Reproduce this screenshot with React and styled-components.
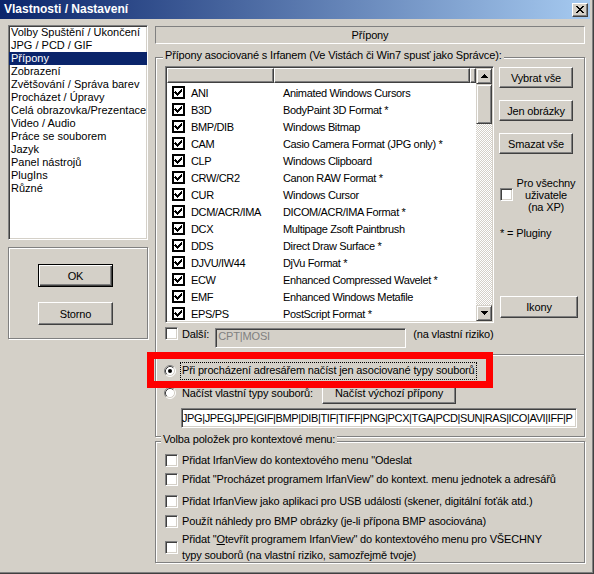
import React from 'react';
import styled, { createGlobalStyle, css } from 'styled-components';

const GlobalStyle = createGlobalStyle`
  html, body {
    margin: 0;
    padding: 0;
    background: #d4d0c8;
  }
  body {
    font-family: "Liberation Sans", Arial, sans-serif;
    font-size: 11px;
    letter-spacing: -0.15px;
    color: #000;
  }
  * {
    box-sizing: border-box;
  }
`;

// classic 3D edges
const sunken = css`
  border: 1px solid;
  border-color: #808080 #fff #fff #808080;
  box-shadow: inset 1px 1px #404040, inset -1px -1px #d4d0c8;
`;

const raised = css`
  border: 1px solid;
  border-color: #fff #404040 #404040 #fff;
  box-shadow: inset -1px -1px #808080;
`;

const etched = css`
  border: 1px solid #808080;
  box-shadow: inset 1px 1px #fff, 1px 1px #fff;
`;

const Window = styled.div`
  position: relative;
  width: 594px;
  height: 574px;
  overflow: hidden;
  background: #d4d0c8;
  box-shadow: inset -1px -1px #404040, inset -2px -2px #808080;
`;

const TitleBar = styled.div`
  display: flex;
  align-items: center;
  justify-content: space-between;
  width: 590px;
  height: 19px;
  padding: 0 2px 0 4px;
  background: linear-gradient(to right, #0a246a, #a6caf0);
`;

const TitleText = styled.span`
  color: #fff;
  font-weight: bold;
  font-size: 12px;
  letter-spacing: 0;
  line-height: 19px;
`;

const CloseButton = styled.div`
  display: flex;
  align-items: center;
  justify-content: center;
  width: 16px;
  height: 14px;
  background: #d4d0c8;
  ${raised}
`;

const Body = styled.div`
  display: flex;
  padding: 6px 0 0 8px;
`;

const LeftColumn = styled.div`
  display: flex;
  flex-direction: column;
  width: 140px;
`;

const CategoryList = styled.div`
  height: 215px;
  background: #fff;
  ${sunken}
`;

const CategoryItem = styled.div`
  height: 13px;
  line-height: 13px;
  padding-left: 2px;
  letter-spacing: 0;
  white-space: nowrap;
  background: ${(p) => (p.$selected ? '#0a246a' : 'transparent')};
  color: ${(p) => (p.$selected ? '#fff' : '#000')};
`;

const ActionGroup = styled.div`
  display: flex;
  flex-direction: column;
  align-items: flex-start;
  gap: 15px;
  height: 92px;
  margin-top: 7px;
  padding: 16px 0 0 29px;
  ${etched}
`;

const defaultEdge = css`
  border: 1px solid #000;
  box-shadow: inset 1px 1px #fff, inset -1px -1px #404040, inset -2px -2px #808080;
`;

const PushButton = styled.div`
  display: flex;
  align-items: center;
  justify-content: center;
  flex-shrink: 0;
  width: ${(p) => p.$w || 75}px;
  height: ${(p) => p.$h || 23}px;
  margin-top: ${(p) => p.$top || 0}px;
  margin-left: ${(p) => p.$left || 0}px;
  background: #d4d0c8;
  white-space: nowrap;
  ${(p) => (p.$default ? defaultEdge : raised)}
`;

const RightColumn = styled.div`
  display: flex;
  flex-direction: column;
  width: 430px;
  margin-left: 7px;
`;

const PageHeader = styled.div`
  height: 18px;
  margin-top: 1px;
  border: 1px solid;
  border-color: #808080 #fff #fff #808080;
  line-height: 16px;
  text-align: center;
`;

const GroupBox = styled.div`
  position: relative;
  display: flex;
  flex-direction: column;
  margin-top: ${(p) => p.$top}px;
  padding: ${(p) => p.$pad};
  height: ${(p) => (p.$height ? `${p.$height}px` : 'auto')};
  ${etched}
`;

const Legend = styled.span`
  position: absolute;
  top: -9px;
  left: ${(p) => p.$left}px;
  padding: 0 2px;
  line-height: 13px;
  white-space: nowrap;
  background: #d4d0c8;
`;

const TopRow = styled.div`
  display: flex;
  align-items: flex-start;
`;

const ListView = styled.div`
  display: flex;
  width: 329px;
  height: 257px;
  background: #fff;
  ${sunken}
  padding: 1px;
`;

const ListMain = styled.div`
  flex: 1;
  display: flex;
  flex-direction: column;
  overflow: hidden;
`;

const HeaderRow = styled.div`
  display: flex;
  height: 15px;
  flex-shrink: 0;
`;

const HeaderCell = styled.div`
  width: ${(p) => (p.$w ? `${p.$w}px` : 'auto')};
  flex: ${(p) => (p.$w ? 'none' : 1)};
  background: #d4d0c8;
  ${raised}
`;

const Rows = styled.div`
  padding-top: 1px;
`;

const Row = styled.div`
  display: flex;
  align-items: center;
  height: 17px;
  letter-spacing: -0.35px;
  white-space: nowrap;
`;

const ExtCell = styled.div`
  display: flex;
  align-items: center;
  gap: 6px;
  width: 107px;
  padding-left: 5px;
`;

const DescCell = styled.div`
  padding-left: 9px;
`;

const ScrollBar = styled.div`
  display: flex;
  flex-direction: column;
  width: 16px;
  flex-shrink: 0;
`;

const scrollEdge = css`
  border: 1px solid;
  border-color: #d4d0c8 #404040 #404040 #d4d0c8;
  box-shadow: inset 1px 1px #fff, inset -1px -1px #808080;
`;

const ScrollButton = styled.div`
  display: flex;
  align-items: center;
  justify-content: center;
  height: 16px;
  background: #d4d0c8;
  ${scrollEdge}
`;

const ScrollThumb = styled.div`
  height: 40px;
  background: #d4d0c8;
  ${scrollEdge}
`;

const ScrollTrack = styled.div`
  flex: 1;
  background: repeating-conic-gradient(#d4d0c8 0 25%, #fff 0 50%) 0 0 / 2px 2px;
`;

const SideColumn = styled.div`
  display: flex;
  flex-direction: column;
  align-items: flex-start;
  margin-left: 5px;
  padding-top: 1px;
`;

const AllUsers = styled.div`
  display: flex;
  align-items: flex-start;
  margin-top: 23px;
  margin-left: 1px;
`;

const AllUsersText = styled.div`
  width: 64px;
  margin-left: 1px;
  line-height: 12px;
  text-align: center;
`;

const Note = styled.div`
  margin-top: 14px;
  margin-left: 1px;
  line-height: 13px;
`;

const Box = styled.span`
  display: inline-block;
  flex-shrink: 0;
  width: 13px;
  height: 13px;
  margin-top: ${(p) => p.$top || 0}px;
  background: #fff;
  border: 1px solid;
  border-color: #808080 #fff #fff #808080;
  box-shadow: inset 1px 1px #404040, inset -1px -1px #d4d0c8;
`;

const ExtraRow = styled.div`
  display: flex;
  align-items: flex-start;
  height: 20px;
  margin-top: 5px;
`;

const Label = styled.span`
  line-height: 13px;
  margin-left: ${(p) => p.$left || 0}px;
  white-space: nowrap;
`;

const TextField = styled.div`
  width: ${(p) => p.$w}px;
  height: 20px;
  margin-top: ${(p) => p.$top || 0}px;
  margin-left: ${(p) => p.$left || 0}px;
  padding: ${(p) => p.$pad || '2px 2px'};
  overflow: hidden;
  white-space: nowrap;
  line-height: 14px;
  letter-spacing: ${(p) => p.$tight || -0.15}px;
  background: ${(p) => (p.$disabled ? '#d4d0c8' : '#fff')};
  color: ${(p) => (p.$disabled ? '#808080' : '#000')};
  ${sunken}
`;

const Separator = styled.div`
  height: 2px;
  margin: 6px 0 0 -9px;
  width: calc(100% + 9px);
  border-top: 1px solid #808080;
  border-bottom: 1px solid #fff;
`;

const RadioRow = styled.div`
  display: flex;
  align-items: center;
  height: ${(p) => p.$h}px;
  margin-top: ${(p) => p.$top}px;
  margin-left: -1px;
`;

const FocusLabel = styled.span`
  margin-left: 4px;
  padding: 1px 1px 2px;
  line-height: 13px;
  border: 1px dotted #000;
  white-space: nowrap;
`;

const FixedLabel = styled.span`
  width: 146px;
  padding-left: 6px;
  line-height: 13px;
  white-space: nowrap;
`;

const OptionRow = styled.div`
  display: flex;
  align-items: center;
  margin-top: ${(p) => p.$top}px;
`;

const OptionText = styled.span`
  margin-left: 4px;
  line-height: ${(p) => p.$lh || 13}px;
`;

const Highlight = styled.div`
  position: absolute;
  left: 147px;
  top: 352px;
  width: 346px;
  height: 36px;
  border: 7px solid #ff0000;
`;

const ListCheck = () => (
  <svg width="13" height="13" viewBox="0 0 13 13" shapeRendering="crispEdges">
    <rect x="1" y="1" width="11" height="11" fill="#fff" stroke="#000" strokeWidth="2" />
    <path d="M3 5h1v1h1v1h1v-1h1v-1h1v-1h1v-1h1v3h-1v1h-1v1h-1v1h-1v1h-1v-1h-1v-1h-1v-1h-1z" fill="#000" />
  </svg>
);

const Radio = ({ checked }) => (
  <svg width="12" height="12" viewBox="0 0 12 12">
    <circle cx="6" cy="6" r="5" fill="#fff" />
    <path d="M2.11 9.89 A5.5 5.5 0 0 1 9.89 2.11" fill="none" stroke="#808080" />
    <path d="M9.89 2.11 A5.5 5.5 0 0 1 2.11 9.89" fill="none" stroke="#fff" />
    <path d="M2.82 9.18 A4.5 4.5 0 0 1 9.18 2.82" fill="none" stroke="#404040" />
    <path d="M9.18 2.82 A4.5 4.5 0 0 1 2.82 9.18" fill="none" stroke="#d4d0c8" />
    {checked && <circle cx="6" cy="6" r="2" fill="#000" />}
  </svg>
);

const Arrow = ({ down }) => (
  <svg width="7" height="4" viewBox="0 0 7 4" shapeRendering="crispEdges">
    {down ? (
      <path d="M0 0h7v1h-1v1h-1v1h-1v1h-1v-1h-1v-1h-1v-1h-1z" fill="#000" />
    ) : (
      <path d="M3 0h1v1h1v1h1v1h1v1h-7v-1h1v-1h1v-1h1z" fill="#000" />
    )}
  </svg>
);

const CloseGlyph = () => (
  <svg width="8" height="7" viewBox="0 0 8 7" shapeRendering="crispEdges">
    <path
      d="M0 0h2v1h1v1h2v-1h1v-1h2v1h-1v1h-1v1h-1v1h1v1h1v1h1v1h-2v-1h-1v-1h-2v1h-1v1h-2v-1h1v-1h1v-1h1v-1h-1v-1h-1v-1h-1z"
      fill="#000"
    />
  </svg>
);

const categories = [
  'Volby Spuštění / Ukončení',
  'JPG / PCD / GIF',
  'Přípony',
  'Zobrazení',
  'Zvětšování / Správa barev',
  'Procházet / Úpravy',
  'Celá obrazovka/Prezentace',
  'Video / Audio',
  'Práce se souborem',
  'Jazyk',
  'Panel nástrojů',
  'PlugIns',
  'Různé',
];

const formats = [
  ['ANI', 'Animated Windows Cursors'],
  ['B3D', 'BodyPaint 3D Format *'],
  ['BMP/DIB', 'Windows Bitmap'],
  ['CAM', 'Casio Camera Format (JPG only) *'],
  ['CLP', 'Windows Clipboard'],
  ['CRW/CR2', 'Canon RAW Format *'],
  ['CUR', 'Windows Cursor'],
  ['DCM/ACR/IMA', 'DICOM/ACR/IMA Format *'],
  ['DCX', 'Multipage Zsoft Paintbrush'],
  ['DDS', 'Direct Draw Surface *'],
  ['DJVU/IW44', 'DjVu Format *'],
  ['ECW', 'Enhanced Compressed Wavelet *'],
  ['EMF', 'Enhanced Windows Metafile'],
  ['EPS/PS', 'PostScript Format *'],
];

const App = () => {
  return (
    <>
      <GlobalStyle />
      <Window>
        <TitleBar>
          <TitleText>Vlastnosti / Nastavení</TitleText>
          <CloseButton>
            <CloseGlyph />
          </CloseButton>
        </TitleBar>

        <Body>
          <LeftColumn>
            <CategoryList>
              {categories.map((c) => (
                <CategoryItem key={c} $selected={c === 'Přípony'}>
                  {c}
                </CategoryItem>
              ))}
            </CategoryList>
            <ActionGroup>
              <PushButton $default>OK</PushButton>
              <PushButton>Storno</PushButton>
            </ActionGroup>
          </LeftColumn>

          <RightColumn>
            <PageHeader>Přípony</PageHeader>

            <GroupBox $top={13} $pad="8px 0 8px 9px">
              <Legend $left={7}>Přípony asociované s Irfanem (Ve Vistách či Win7 spusť jako Správce):</Legend>
              <TopRow>
                <ListView>
                  <ListMain>
                    <HeaderRow>
                      <HeaderCell $w={107} />
                      <HeaderCell $w={196} />
                      <HeaderCell />
                    </HeaderRow>
                    <Rows>
                      {formats.map(([ext, desc]) => (
                        <Row key={ext}>
                          <ExtCell>
                            <ListCheck />
                            {ext}
                          </ExtCell>
                          <DescCell>{desc}</DescCell>
                        </Row>
                      ))}
                    </Rows>
                  </ListMain>
                  <ScrollBar>
                    <ScrollButton>
                      <Arrow />
                    </ScrollButton>
                    <ScrollThumb />
                    <ScrollTrack />
                    <ScrollButton>
                      <Arrow down />
                    </ScrollButton>
                  </ScrollBar>
                </ListView>

                <SideColumn>
                  <PushButton $w={74} $h={21}>Vybrat vše</PushButton>
                  <PushButton $w={74} $h={21} $top={12}>Jen obrázky</PushButton>
                  <PushButton $w={74} $h={21} $top={12}>Smazat vše</PushButton>
                  <AllUsers>
                    <Box $top={11} />
                    <AllUsersText>
                      Pro všechny
                      <br />
                      uživatele
                      <br />
                      (na XP)
                    </AllUsersText>
                  </AllUsers>
                  <Note>* = Pluginy</Note>
                  <PushButton $w={78} $h={22} $top={56} $left={1}>Ikony</PushButton>
                </SideColumn>
              </TopRow>

              <ExtraRow>
                <Box $top={-1} />
                <Label $left={4}>Další:</Label>
                <TextField $w={191} $left={6} $disabled $pad="0 2px">CPT|MOSI</TextField>
                <Label $left={7}>(na vlastní riziko)</Label>
              </ExtraRow>

              <Separator />

              <RadioRow $h={17} $top={6}>
                <Radio checked />
                <FocusLabel>Při procházení adresářem načíst jen asociované typy souborů</FocusLabel>
              </RadioRow>

              <RadioRow $h={22} $top={3}>
                <Radio />
                <FixedLabel>Načíst vlastní typy souborů:</FixedLabel>
                <PushButton $w={134} $h={22}>Načíst výchozí přípony</PushButton>
              </RadioRow>

              <TextField $w={396} $left={16} $top={4} $pad="2px 0" $tight={-0.38}>
                JPG|JPEG|JPE|GIF|BMP|DIB|TIF|TIFF|PNG|PCX|TGA|PCD|SUN|RAS|ICO|AVI|IFF|P
              </TextField>
            </GroupBox>

            <GroupBox $top={4} $pad="0 0 0 9px" $height={122}>
              <Legend $left={5}>Volba položek pro kontextové menu:</Legend>
              <OptionRow $top={12}>
                <Box />
                <OptionText>Přidat IrfanView do kontextového menu "Odeslat</OptionText>
              </OptionRow>
              <OptionRow $top={6}>
                <Box />
                <OptionText>Přidat "Procházet programem IrfanView" do kontext. menu jednotek a adresářů</OptionText>
              </OptionRow>
              <OptionRow $top={9}>
                <Box />
                <OptionText>Přidat IrfanView jako aplikaci pro USB události (skener, digitální foťák atd.)</OptionText>
              </OptionRow>
              <OptionRow $top={7}>
                <Box />
                <OptionText>Použít náhledy pro BMP obrázky (je-li přípona BMP asociována)</OptionText>
              </OptionRow>
              <OptionRow $top={3}>
                <Box />
                <OptionText $lh={16}>
                  Přidat "<u>O</u>tevřít programem IrfanView" do kontextového menu pro VŠECHNY
                  <br />
                  typy souborů (na vlastní riziko, samozřejmě tvoje)
                </OptionText>
              </OptionRow>
            </GroupBox>
          </RightColumn>
        </Body>

        <Highlight />
      </Window>
    </>
  );
};

export default App;
